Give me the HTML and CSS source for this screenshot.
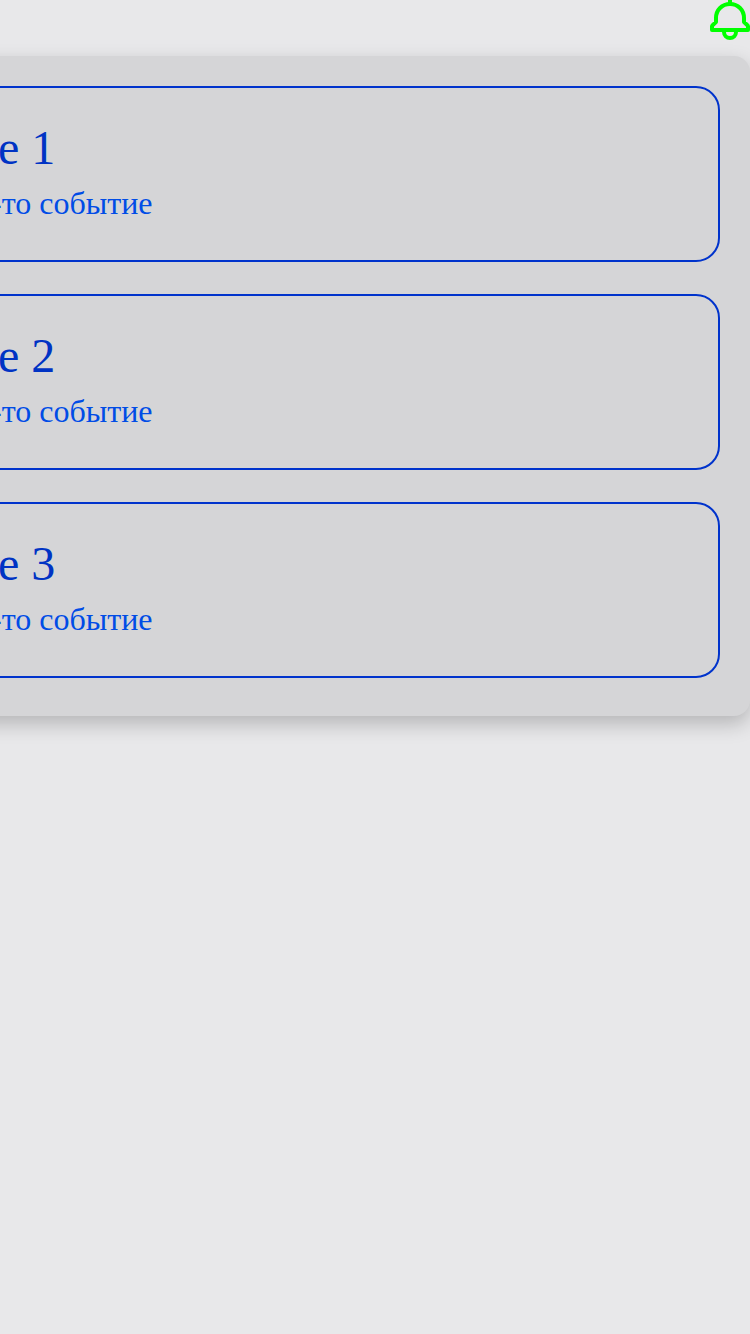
FILE: index.html
```html
<!DOCTYPE html>
<html lang="ru">
<head>
<meta charset="utf-8">
<title>Уведомления</title>
<link rel="stylesheet" href="styles.css">
</head>
<body>
<div class="notifications">
  <svg class="bell" width="40" height="40" viewBox="0 0 40 40" fill="none" stroke="#00ff00" stroke-width="4" stroke-linejoin="round">
    <path d="M20 -2V4"/>
    <path d="M20 4C12 4 6 10 6 18V22L2.6 25.2Q2 25.8 2 26.6V30H38V26.6Q38 25.8 37.4 25.2L34 22V18C34 10 28 4 20 4Z"/>
    <path d="M14 31V32A6 6 0 0 0 26 32V31"/>
  </svg>
  <div class="panel">
    <div class="card">
      <div class="title">Title 1</div>
      <div class="text">Какое-то событие</div>
    </div>
    <div class="card">
      <div class="title">Title 2</div>
      <div class="text">Какое-то событие</div>
    </div>
    <div class="card">
      <div class="title">Title 3</div>
      <div class="text">Какое-то событие</div>
    </div>
  </div>
</div>
</body>
</html>
```
FILE: styles.css
```css
* { box-sizing: border-box; }
body {
  margin: 0;
  min-height: 100vh;
  overflow: hidden;
  background: #e8e8ea;
  font-family: "Liberation Serif", serif;
}
.notifications {
  display: flex;
  flex-direction: column;
  align-items: flex-end;
  gap: 16px;
}
.bell { display: block; }
.panel {
  width: 900px;
  height: 660px;
  padding: 30px;
  display: flex;
  flex-direction: column;
  gap: 32px;
  background: #d5d5d7;
  border-radius: 16px;
  box-shadow: 0 8px 20px rgba(0, 0, 0, 0.22);
}
.card {
  height: 176px;
  padding: 32px 0;
  border: 2px solid #0033cc;
  border-radius: 24px;
  text-align: right;
}
.title {
  width: 173.3px;
  font-size: 48px;
  line-height: 56px;
  color: #0033c4;
}
.text {
  width: 270.5px;
  font-size: 32px;
  line-height: 36px;
  margin-top: 9px;
  color: #004ce6;
  white-space: nowrap;
}
```
